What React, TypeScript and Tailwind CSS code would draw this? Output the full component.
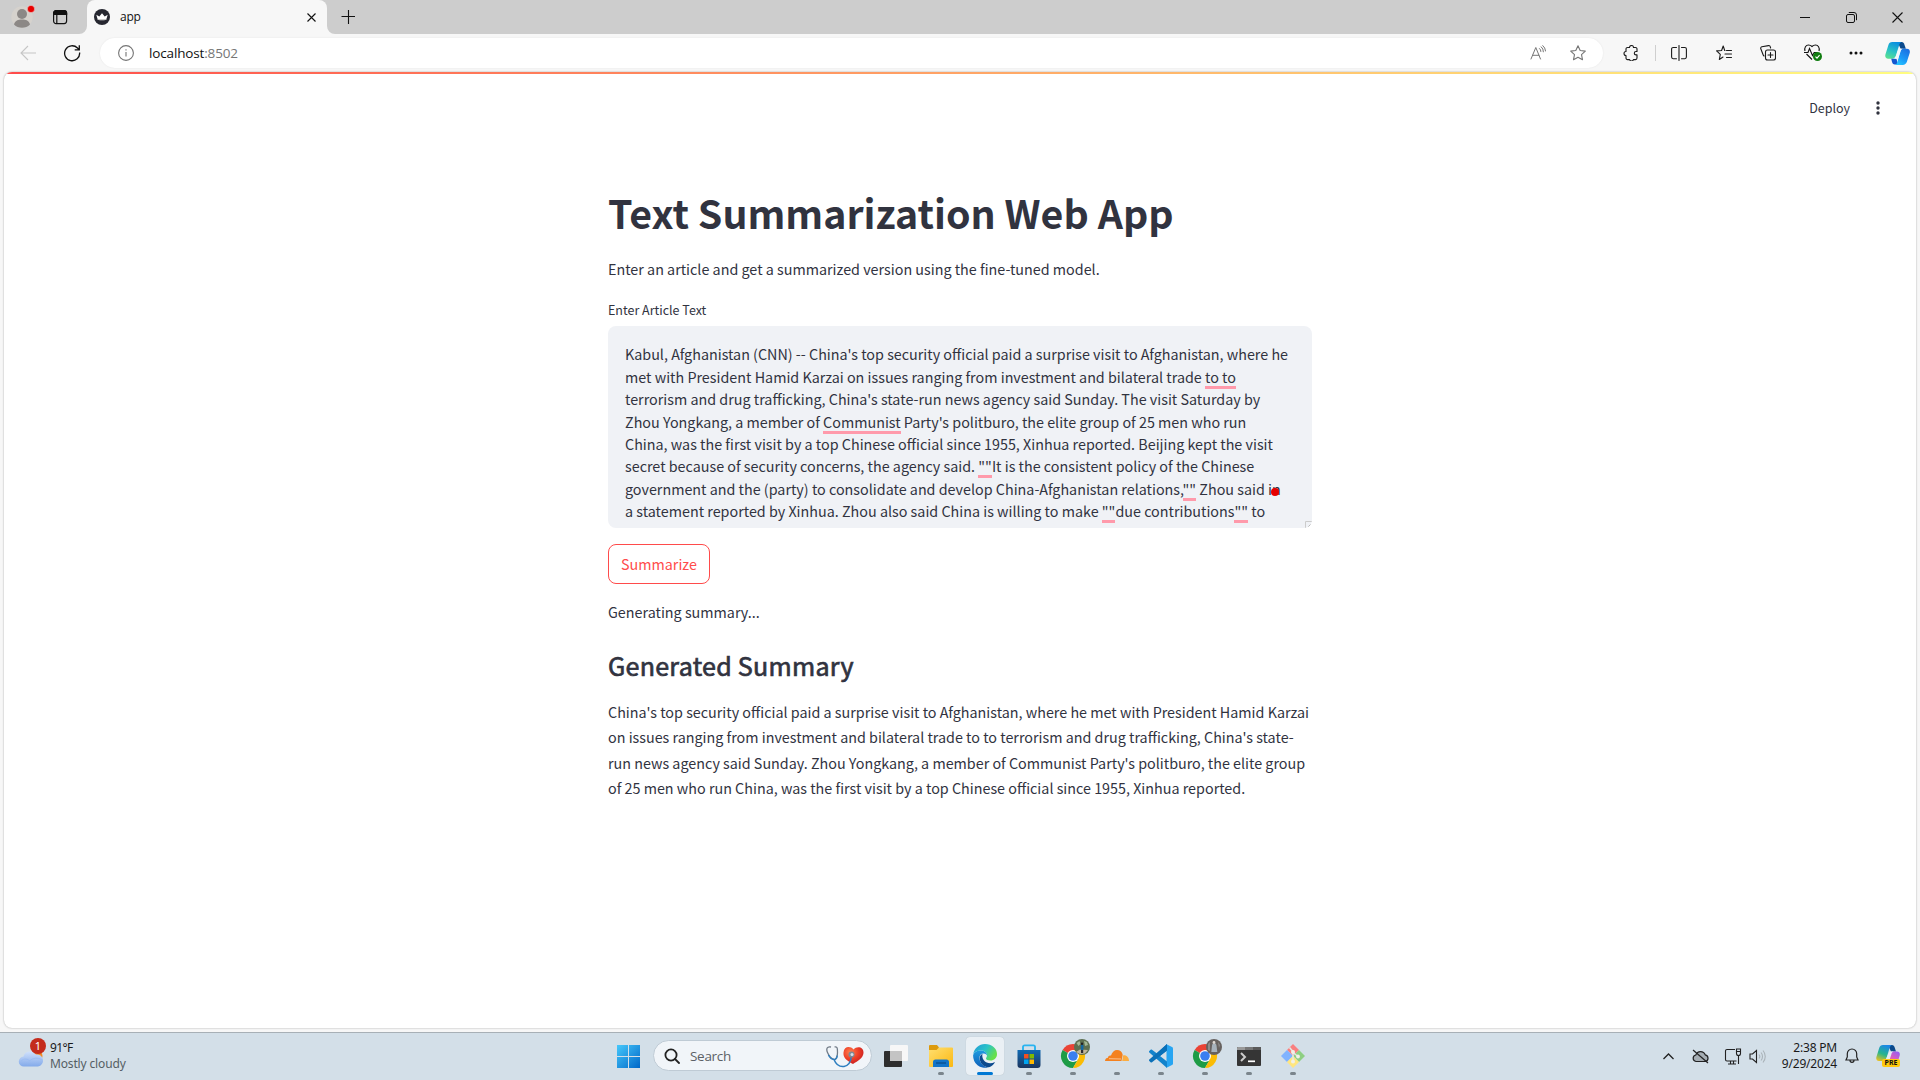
import React from "react";

function Mark({ children }: { children: React.ReactNode }) {
  return (
    <span className="relative">
      {children}
      <span className="absolute top-[20px] right-0 left-0 h-[3px] bg-[#ff9aab]" />
    </span>
  );
}

const INPUT_LINES: React.ReactNode[] = [
  <>Kabul, Afghanistan (CNN) -- China's top security official paid a surprise visit to Afghanistan, where he</>,
  <>met with President Hamid Karzai on issues ranging from investment and bilateral trade <Mark>to to</Mark></>,
  <>terrorism and drug trafficking, China's state-run news agency said Sunday. The visit Saturday by</>,
  <>Zhou Yongkang, a member of <Mark>Communist</Mark> Party's politburo, the elite group of 25 men who run</>,
  <>China, was the first visit by a top Chinese official since 1955, Xinhua reported. Beijing kept the visit</>,
  <>secret because of security concerns, the agency said. <Mark>""</Mark>It is the consistent policy of the Chinese</>,
  <>government and the (party) to consolidate and develop China-Afghanistan relations,<Mark>""</Mark> Zhou said in</>,
  <>a statement reported by Xinhua. Zhou also said China is willing to make <Mark>""</Mark>due contributions<Mark>""</Mark> to</>,
];

const SUMMARY_LINES = [
  "China's top security official paid a surprise visit to Afghanistan, where he met with President Hamid Karzai",
  "on issues ranging from investment and bilateral trade to to terrorism and drug trafficking, China's state-",
  "run news agency said Sunday. Zhou Yongkang, a member of Communist Party's politburo, the elite group",
  "of 25 men who run China, was the first visit by a top Chinese official since 1955, Xinhua reported.",
];

function Cell({ w, children }: { w: string; children: React.ReactNode }) {
  return <div className={`${w} flex shrink-0 items-center justify-center`}>{children}</div>;
}

function Line({ s = 16, children, color = "#1b1b1b", sw = 1.1 }: { s?: number; children: React.ReactNode; color?: string; sw?: number }) {
  return (
    <svg width={s} height={s} viewBox={`0 0 ${s} ${s}`} fill="none" stroke={color} strokeWidth={sw} strokeLinecap="round" strokeLinejoin="round">
      {children}
    </svg>
  );
}

function TabStrip() {
  return (
    <div className="flex h-[34px] bg-[#cdcdcd]">
      <div className="flex h-[34px] w-[87px] items-center">
        <svg className="ml-[10px]" width="26" height="26" viewBox="0 0 26 26">
          <circle cx="12" cy="13" r="10.7" fill="#d6d2cd" />
          <circle cx="12" cy="10" r="5" fill="#8c8886" />
          <path d="M4 20.5c1-4 4-5 8-5s7 1 8 5c-2 2.200-5 3.200-8 3.200s-6-1-8-3.200z" fill="#8c8886" />
          <circle cx="21" cy="5" r="3.600" fill="#e80000" stroke="#f0d8d6" strokeWidth=".5" />
        </svg>
        <svg className="ml-[16px]" width="16" height="16" viewBox="0 0 16 16" fill="none" stroke="#111" strokeWidth="1.200">
          <rect x="1.600" y="1.600" width="13" height="13" rx="2.500" />
          <path d="M1.600 4.200a2.600 2.600 0 0 1 2.600-2.600h8a2.500 2.500 0 0 1 2.400 2.600v1.200h-13z" fill="#111" />
          <path d="M4.800 5v9.500" />
        </svg>
      </div>
      <div className="relative flex h-[34px] w-[240px] items-center rounded-t-[8px] bg-[#f7f7f7]">
        <svg className="absolute bottom-0 -left-[8px]" width="8" height="8"><path d="M8 0v8H0a8 8 0 0 0 8-8z" fill="#f7f7f7" /></svg>
        <svg className="absolute bottom-0 -right-[8px]" width="8" height="8"><path d="M0 0v8h8a8 8 0 0 1-8-8z" fill="#f7f7f7" /></svg>
        <svg className="ml-[7px]" width="16" height="16" viewBox="0 0 16 16">
          <circle cx="8" cy="8" r="8" fill="#262730" />
          <path d="M2.300 5.800l3 1.700L8 4.200l2.700 3.300 3-1.700-1.500 4.900c-2.800.8-5.600.8-8.400 0z" fill="#fff" />
          <path d="M3.700 10.500h8.600" stroke="#bbb" strokeWidth=".8" />
        </svg>
        <span className="ml-[10px] font-['Open_Sans'] text-[12px] leading-4 tracking-[-0.2px] text-[#111]">app</span>
        <svg className="mr-[11px] ml-auto" width="9" height="9" viewBox="0 0 9 9" stroke="#111" strokeWidth="1.100"><path d="M.5.5l8 8M8.500.5l-8 8" /></svg>
      </div>
      <div className="flex w-[42px] items-center justify-center">
        <svg width="14" height="14" viewBox="0 0 14 14" stroke="#111" strokeWidth="1.100"><path d="M7.500 0v14M.5 6.500h14" /></svg>
      </div>
      <div className="ml-auto flex">
        <Cell w="w-[46px]"><svg width="10" height="10" stroke="#111"><path d="M0 5.500h10" /></svg></Cell>
        <Cell w="w-[46px]">
          <svg width="11" height="11" viewBox="0 0 11 11" fill="none" stroke="#111"><rect x=".5" y="2.500" width="8" height="8" rx="1.500" /><path d="M2.800.5h5.200a2.500 2.500 0 0 1 2.500 2.500v5.200" /></svg>
        </Cell>
        <Cell w="w-[46px]"><svg width="11" height="11" viewBox="0 0 11 11" stroke="#111" strokeWidth="1.100"><path d="M.5.5l10 10M10.500.5l-10 10" /></svg></Cell>
      </div>
    </div>
  );
}

function Toolbar() {
  return (
    <div className="flex h-[38px] items-center bg-[#f7f7f7]">
      <div className="flex w-[100px] items-center">
        <svg className="ml-[20px]" width="17" height="16" viewBox="0 0 17 16" fill="none" stroke="#c6c6c6" strokeWidth="1.100"><path d="M16 8H1M8 1L1 8l7 7" /></svg>
        <svg className="ml-[26px]" width="18" height="18" viewBox="0 0 18 18" fill="none" stroke="#111" strokeWidth="1.300"><path d="M16.600 8.500A7.500 7.500 0 1 1 14.500 4l1.500 1.500M16.300 1.200v4.600h-4.600" /></svg>
      </div>
      <div className="flex h-[30px] w-[1503px] items-center rounded-full bg-white shadow-[0_0_2px_rgba(0,0,0,0.08)]">
        <svg className="ml-[18px]" width="16" height="16" viewBox="0 0 16 16" fill="none" stroke="#747474" strokeWidth="1.100"><circle cx="8" cy="8" r="7.400" /><path d="M8 7v4.500M8 4.300v1.300" /></svg>
        <span className="ml-[15px] font-['Open_Sans'] text-[13.500px] leading-5 tracking-[-0.15px] text-[#111]">localhost<span className="text-[#767676]">:8502</span></span>
        <div className="mr-[5px] ml-auto flex">
          <Cell w="w-[40px]"><Line color="#767676" sw={1}><path d="M1 14L5.800 2.500l4.700 11.500M2.700 10.300h6.200M9.500 3.500a3.500 3.500 0 0 1 1.400 3M11.200 1.800a6 6 0 0 1 2.200 5M12.800.6A8 8 0 0 1 15.600 6" /></Line></Cell>
          <Cell w="w-[40px]"><Line color="#767676"><path d="M8 .8l2.200 4.700 5.100.6-3.800 3.500 1 5.100L8 12.200l-4.500 2.500 1-5.100L.7 6.100l5.100-.6z" /></Line></Cell>
        </div>
      </div>
      <div className="ml-[8px] flex items-center">
        <Cell w="w-[40px]">
          <Line><path d="M4.500 2.500h2a2 2 0 0 1 4 0h2a1.500 1.500 0 0 1 1.500 1.500v2.500h-1a1.700 1.700 0 0 0 0 3.400h1V13a1.600 1.600 0 0 1-1.500 1.600h-2.100a2 2 0 0 1-3.800 0H4.500A1.500 1.500 0 0 1 3 13v-2.500a2 2 0 0 1 0-4V4a1.500 1.500 0 0 1 1.500-1.500z" /></Line>
        </Cell>
        <div className="ml-[4px] h-4 w-px bg-[#cfcfcf]" />
        <Cell w="w-[46px]"><Line><path d="M5.500 2.500H2.200A1.600 1.600 0 0 0 .6 4.100v8a1.600 1.600 0 0 0 1.600 1.600h3.300M10.500 2.500h3.300a1.600 1.600 0 0 1 1.600 1.600v8a1.600 1.600 0 0 1-1.600 1.600h-3.300M8 .5v15" /></Line></Cell>
        <Cell w="w-[43px]"><Line><path d="M9 5.500h-.3L7.200 1 5.600 5.500.6 5.900l3.700 3.400-1 5.200L7 12M10.500 5.500H15.500M9 9h6.500M10.500 12.500h5" /></Line></Cell>
        <Cell w="w-[45px]"><Line><path d="M3 9.500L.7 3.500A1.600 1.600 0 0 1 1.800 1.800L8.500.6a1.600 1.600 0 0 1 1.800 1.200l.3 1.200M3 9.500a5 5 0 0 0 1 1.500" /><rect x="5.500" y="5" width="10" height="10" rx="2" /><path d="M10.500 7.500v5M8 10h5" /></Line></Cell>
        <Cell w="w-[45px]">
          <svg width="20" height="18" viewBox="0 0 20 18" fill="none" stroke="#111" strokeWidth="1.100">
            <path d="M2 7C1 3.500 3 1 5.500 1 7.500 1 9 2.500 9 2.500S10.500 1 12.500 1C15 1 17 3.500 16 7M3.500 10L9 15.500M1 8.500h4l1.500-4 3 7 1.700-3H14" />
            <circle cx="14.500" cy="12.500" r="4.500" fill="#107c10" stroke="none" /><path d="M12.500 12.700l1.500 1.500 2.600-3" stroke="#fff" />
          </svg>
        </Cell>
        <Cell w="w-[42px]"><svg width="14" height="4" fill="#111"><circle cx="2" cy="2" r="1.500" /><circle cx="7" cy="2" r="1.500" /><circle cx="12" cy="2" r="1.500" /></svg></Cell>
        <div className="w-[40px] pl-[8px]"><Copilot size={25} id="a" /></div>
      </div>
    </div>
  );
}

function Copilot({ size, id }: { size: number; id: string }) {
  const pink = id === "b";
  return (
    <svg width={size} height={size} viewBox="0 0 24 24">
      <defs>
        <linearGradient id={`${id}1`} x1=".6" y1="0" x2=".2" y2="1"><stop offset="0" stopColor={pink ? "#1a86e8" : "#0a8fe0"} /><stop offset=".55" stopColor={pink ? "#28b58c" : "#2bc4c4"} /><stop offset="1" stopColor={pink ? "#e8c020" : "#5be08f"} /></linearGradient>
        <linearGradient id={`${id}2`} x1=".8" y1="0" x2=".2" y2="1"><stop offset="0" stopColor={pink ? "#9a5cf0" : "#1b6fe0"} /><stop offset=".6" stopColor={pink ? "#f060a8" : "#1a9cf8"} /><stop offset="1" stopColor={pink ? "#ff9a50" : "#28c8ff"} /></linearGradient>
      </defs>
      <path d="M12 1h4c1.500 0 2.200 1 2.700 2.500l1.300 4h-5z" fill="#0b4a8c" />
      <path d="M7 1h9c-1.500.5-2 1.500-2.500 3.300l-3 9.700c-.6 2-1.800 3-3.500 3H3C.8 17-.2 15.300.4 13L3.200 4C3.800 2 5 1 7 1z" fill={`url(#${id}1)`} />
      <path d="M6 17h5l1.500 5.500H9.500C7.800 22.500 7 21.500 6.700 20z" fill={pink ? "#f08030" : "#1457d0"} />
      <path d="M17 7.500h4c2.300 0 3.300 1.700 2.700 4l-2.700 8.500c-.6 2-2 3-4 3H9.500c1.500-.5 2-1.500 2.500-3l2.500-9.500c.5-2 1.300-3 2.500-3z" fill={`url(#${id}2)`} />
      {pink && <path d="M13.500 7.500h4c-1.200.4-1.700 1.300-2.200 3L13.500 16h-4z" fill="#e4ecf4" />}
      {!pink && <path d="M13 7.500h4c-1.200.4-1.700 1.300-2.200 3l-2.200 6.500H9.700z" fill="#f2f8fc" />}
    </svg>
  );
}

function Page() {
  return (
    <div className="h-[960px] bg-[#f7f7f7] px-1">
      <div className="h-[956px] overflow-hidden rounded-[8px] bg-white font-['Noto_Sans_CJK_SC',sans-serif] text-[#31333f] shadow-[0_0_2px_rgba(0,0,0,0.35)]">
        <div className="h-[2px] bg-[linear-gradient(90deg,#ff4b4b,#fffd80)]" />
        <div className="flex h-[68px] items-center justify-end pr-[36px]">
          <span className="text-[12.500px] leading-5">Deploy</span>
          <svg className="ml-[26px]" width="4" height="14" fill="#31333f"><circle cx="2" cy="2" r="1.700" /><circle cx="2" cy="7" r="1.700" /><circle cx="2" cy="12" r="1.700" /></svg>
        </div>
        <div className="mx-auto mt-[43px] w-[704px] text-[14.330px] whitespace-nowrap">
          <h1 className="h-[54px] text-[39.320px] leading-[53px] font-bold">Text Summarization Web App</h1>
          <p className="mt-[17px] h-[26px] leading-[26.400px]">Enter an article and get a summarized version using the fine-tuned model.</p>
          <label className="mt-[17px] block h-[27px] text-[12.500px] leading-[22px]">Enter Article Text</label>
          <div className="relative h-[202px] overflow-hidden rounded-[8px] bg-[#f0f2f6] px-[17px] pt-[17.400px] leading-[22.400px]">
            {INPUT_LINES.map((line, i) => (
              <div key={i} className="h-[22.400px]">{line}</div>
            ))}
            <span className="absolute top-[162px] left-[663px] h-2 w-2 rounded-full bg-[#e60000]" />
            <svg className="absolute right-0 bottom-0" width="7" height="7" fill="none" stroke="#aaa"><path d="M.5 7V.5H7" stroke="#ccc" /><path d="M3 6l3-3" /></svg>
          </div>
          <button className="mt-4 flex h-10 w-[102px] items-center justify-center rounded-[8px] border border-[#ff4b4b] leading-[25.600px] text-[#ff4b4b]">Summarize</button>
          <p className="mt-[15px] h-[49px] leading-[26.400px]">Generating summary...</p>
          <h2 className="h-[50.700px] text-[25.060px] leading-[34.600px] font-normal tracking-[0.270px] [-webkit-text-stroke:0.700px_#31333f]">Generated Summary</h2>
          {SUMMARY_LINES.map((l) => (
            <p key={l} className="h-[25.600px] leading-[25.600px]">{l}</p>
          ))}
        </div>
      </div>
    </div>
  );
}

function TaskIcon({ children, active = false }: { children: React.ReactNode; active?: boolean }) {
  return (
    <div className="relative flex h-[46px] w-[44px] shrink-0 items-center justify-center">
      {active && <div className="absolute top-[4px] left-[3px] h-[38px] w-[38px] rounded-[4px] bg-[#eaf0f5] shadow-[0_0_1px_rgba(0,0,0,0.2)]" />}
      <div className="relative">{children}</div>
      {active ? (
        <div className="absolute bottom-[4px] h-[3px] w-4 rounded-full bg-[#0078d4]" />
      ) : (
        <div className="absolute bottom-[4px] h-[3px] w-[6px] rounded-full bg-[#7b858c]" />
      )}
    </div>
  );
}

function Chrome({ photo }: { photo: "park" | "street" }) {
  return (
    <svg className="overflow-visible" width="30" height="30" viewBox="0 0 30 30">
      <path d="M15 15L4.600 9A12 12 0 0 1 25.400 9z" fill="#ea4335" />
      <path d="M15 15L20.200 18 15 27A12 12 0 0 1 4.600 9z" fill="#1e9c46" />
      <path d="M15 9h10.400A12 12 0 0 1 15 27l5.200-9z" fill="#fbbc04" />
      <circle cx="15" cy="15" r="6" fill="#fff" /><circle cx="15" cy="15" r="4.800" fill="#3a7ff0" />
      {photo === "park" ? (
        <g><circle cx="24" cy="6" r="8" fill="#5d6f50" /><path d="M18.500 2l3-2 1 3-2 2zM26 0l3 1 1 3-3 1z" fill="#a3b795" /><path d="M18 11l4-2.500 8 .5-3 3.500-5 .5z" fill="#c1b79b" /><path d="M22.800 4h2.600v5h-2.600z" fill="#1467a0" /><path d="M23 9h2.200v3H23z" fill="#2a2a30" /><circle cx="24" cy="2.700" r="1.200" fill="#222" /></g>
      ) : (
        <g><circle cx="24" cy="6" r="8" fill="#67625f" /><path d="M18 3l2-2v9l-2-1zM28 1l2 3-1 3z" fill="#8d8b89" /><path d="M22 4.500a2 2 0 0 1 4.500 0l.8 6.500h-6z" fill="#a7b2bb" /><circle cx="24" cy="1.500" r="1.400" fill="#ded8d2" /></g>
      )}
    </svg>
  );
}

function Taskbar() {
  return (
    <div className="flex h-[48px] border-t border-[#a8b0b6] bg-[#d3dfe8] pb-px font-['Noto_Sans'] text-[12px]">
      <div className="flex w-[607px] pt-[8px] pl-[18px]">
        <svg width="30" height="30" viewBox="0 0 30 30">
          <defs><linearGradient id="cl" x1="0" y1="0" x2="0" y2="1"><stop offset="0" stopColor="#cfe0fb" /><stop offset="1" stopColor="#83aaea" /></linearGradient></defs>
          <circle cx="19" cy="15" r="5.500" fill="#f08a24" />
          <path d="M6 25.500a5 5 0 0 1-.5-10A7 7 0 0 1 18 13.500a6 6 0 0 1 2 12z" fill="url(#cl)" />
          <path d="M3 20c3-3 7-2 9 0 2-3 8-4 12-1" fill="none" stroke="#9bbcf2" />
        </svg>
        <div className="relative left-[4px] -mt-[3px] -ml-[22px] flex h-4 w-4 items-center justify-center self-start rounded-full bg-[#c42b1c] text-[11px] leading-4 text-white">1</div>
        <div className="-mt-px ml-[8px] text-[#1a1a1a]">
          <div className="leading-4 tracking-[-0.6px]">91°F</div>
          <div className="leading-4 tracking-[-0.15px] text-[#555e64]">Mostly cloudy</div>
        </div>
      </div>
      <Cell w="w-[43px]">
        <svg width="23" height="23" viewBox="0 0 23 23"><defs><linearGradient id="win" x1="0" y1="0" x2="1" y2="1"><stop offset="0" stopColor="#46c8fb" /><stop offset="1" stopColor="#0067c8" /></linearGradient></defs><path d="M0 0h11v11H0zM12 0h11v11H12zM0 12h11v11H0zM12 12h11v11H12z" fill="url(#win)" /></svg>
      </Cell>
      <div className="mt-[7px] ml-[3px] flex h-[31px] w-[219px] items-center rounded-full border border-[#bfcbd5] bg-[#f1f5f9]">
        <svg className="ml-[10px]" width="16" height="16" viewBox="0 0 16 16" fill="none" stroke="#222" strokeWidth="1.800"><circle cx="7" cy="7" r="5.600" /><path d="M11 11l4 4" strokeLinecap="round" /></svg>
        <span className="ml-[10px] font-['Open_Sans'] text-[13.500px] leading-5 tracking-[-0.3px] text-[#5c6166]">Search</span>
        <svg className="mr-[7px] ml-auto" width="38" height="24" viewBox="0 0 38 24" fill="none">
          <defs><radialGradient id="ht" cx=".35" cy=".3" r=".8"><stop offset="0" stopColor="#ff8150" /><stop offset=".5" stopColor="#ee3f28" /><stop offset="1" stopColor="#c01820" /></radialGradient></defs>
          <path d="M27 20c-7-3.500-10-7-9.500-11.500C18 2.500 24 1.500 27.500 5.500 31 1.500 38 3 37.500 9c-.5 5-5.500 8-10.500 11z" fill="url(#ht)" />
          <path d="M5 3C1 2 0 5 1.500 8.500S6 15 8 15.500s3.500-3 3.500-7S11.500 2 8.500 3" stroke="#707a86" strokeWidth="1.300" />
          <path d="M2.500 11C4 14 6 15.500 8 15.500s3-2 3.300-4M8 15.500c2 5 6 7.500 10 7 5-1 7-5 7.500-11" stroke="#2f7fc0" strokeWidth="1.500" />
          <circle cx="25.500" cy="10.500" r="3" fill="#7d8794" /><circle cx="26" cy="10.500" r="1.500" fill="#d9dee5" />
        </svg>
      </div>
      <div className="ml-[3px] flex w-[44px] items-center justify-center">
        <svg className="-translate-x-px" width="24" height="22" viewBox="0 0 24 22"><rect x="0" y="6" width="18" height="16" rx="1" fill="#2e2e2e" /><rect x="6" y="0" width="18" height="16" rx="1" fill="#f7f7f7" /><path d="M6 6h12v10H6z" fill="#c4c4c4" /></svg>
      </div>
      <TaskIcon>
        <svg width="24" height="22" viewBox="0 0 24 22"><defs><linearGradient id="fo" x1="0" y1="0" x2="1" y2="1"><stop offset="0" stopColor="#ffdf70" /><stop offset="1" stopColor="#fbb812" /></linearGradient></defs><path d="M0 1a1 1 0 0 1 1-1h7l2 2.500V6H0z" fill="#dd9a0c" /><path d="M0 5h7.500L10 2.500h13a1 1 0 0 1 1 1V21a1 1 0 0 1-1 1H1a1 1 0 0 1-1-1z" fill="url(#fo)" /><path d="M4 22v-5a2.500 2.500 0 0 1 2.500-2.500h11A2.500 2.500 0 0 1 20 17v5z" fill="#1274c8" /><path d="M7 18h10" stroke="#0b5394" strokeWidth="1.500" /></svg>
      </TaskIcon>
      <TaskIcon active>
        <svg width="24" height="24" viewBox="0 0 24 24">
          <defs>
            <linearGradient id="e1" x1="0" y1="0" x2="1" y2=".5"><stop offset="0" stopColor="#2098d8" /><stop offset=".55" stopColor="#2ac3c8" /><stop offset="1" stopColor="#66e04a" /></linearGradient>
            <linearGradient id="e2" x1="0" y1="0" x2="0" y2="1"><stop offset="0" stopColor="#1d9ae0" /><stop offset="1" stopColor="#0f5fb8" /></linearGradient>
          </defs>
          <path d="M.2 10.500C1 4.500 6 0 12 0c7 0 12 4.500 12 10 0 4-3 6.500-6.500 6.500-3 0-4.500-1-4.500-2 0-.8 1-1.200 1-3C14 8.500 11 6.500 8 6.500c-4 0-7 2-7.800 4z" fill="url(#e1)" />
          <path d="M.1 11.500C.5 8.500 4 6.500 7.700 6.500c3.300 0 6.300 2 6.300 5 0 0-1-2-3.500-2C7.500 9.500 6 12 6.500 15c.7 4.500 4.500 7.500 8.500 8.500A12 12 0 0 1 .1 11.500z" fill="url(#e2)" />
          <path d="M9.500 9.700C7 11 6 13.500 7 16.500c1.300 4.500 5.500 7 9 6.800 2.500-.6 5-2.800 6-5.300-4 2-8.500 1.500-11-1.500-1.800-2.200-2-5-1.500-6.800z" fill="#0c4a8e" />
        </svg>
      </TaskIcon>
      <TaskIcon>
        <svg width="24" height="24" viewBox="0 0 24 24"><defs><linearGradient id="st" x1="0" y1="0" x2="0" y2="1"><stop offset="0" stopColor="#0f6ab4" /><stop offset="1" stopColor="#1b355e" /></linearGradient></defs><path d="M6 7V3a1.600 1.600 0 0 1 1.600-1.600h8.800A1.600 1.600 0 0 1 18 3v4" fill="none" stroke="#2ab4f0" strokeWidth="1.900" /><path d="M.5 6h23v15a3 3 0 0 1-3 3h-17a3 3 0 0 1-3-3z" fill="url(#st)" /><path d="M7 10h4.500v4.500H7z" fill="#f25022" /><path d="M12.500 10H17v4.500h-4.500z" fill="#7fba00" /><path d="M7 15.500h4.500V20H7z" fill="#00a4ef" /><path d="M12.500 15.500H17V20h-4.500z" fill="#ffb900" /></svg>
      </TaskIcon>
      <TaskIcon><Chrome photo="park" /></TaskIcon>
      <TaskIcon>
        <svg width="24" height="12" viewBox="0 0 24 12"><path d="M0 11c0-2 1.200-3.200 3-3.300C3 6 4.500 5 6 5.600 7 2 9.500 0 12 0c3 0 5.200 2 5.700 4.700L16.500 11z" fill="#f4811f" /><path d="M17.200 11l1-5.800c3.500-.5 5.800 2.300 5.800 5.800z" fill="#fbad41" /><path d="M4 8.700l12 .3" stroke="#fff" strokeWidth=".5" /></svg>
      </TaskIcon>
      <TaskIcon>
        <svg width="24" height="24" viewBox="0 0 24 24"><path d="M17.500.3L23 3c.6.300 1 .8 1 1.500v15c0 .7-.4 1.200-1 1.500l-5.500 2.700z" fill="#27a5f2" /><path d="M18 0L8 9.500 3 5.800c-.5-.4-1-.3-1.400 0L.3 7c-.4.4-.4 1 0 1.400L18 24v-6.500L11 12l7-5.500z" fill="#1283cc" /><path d="M.3 15.600L18 0v6.500L3 18.200c-.5.4-1 .3-1.400 0L.3 17c-.4-.4-.4-1 0-1.400z" fill="#0a70b8" /></svg>
      </TaskIcon>
      <TaskIcon><Chrome photo="street" /></TaskIcon>
      <TaskIcon>
        <svg width="24" height="19" viewBox="0 0 24 19"><rect width="24" height="19" rx="1" fill="#353535" /><path d="M0 1a1 1 0 0 1 1-1h7v3H0z" fill="#9a9a9a" /><path d="M8 0h8v3H8z" fill="#777" /><path d="M16 0h7a1 1 0 0 1 1 1v2h-8z" fill="#5a5a5a" /><path d="M4 6l4 4-4 4" fill="none" stroke="#ccc" strokeWidth="2" /><path d="M11 14.300h7" stroke="#fff" strokeWidth="1.700" /></svg>
      </TaskIcon>
      <TaskIcon>
        <svg width="24" height="24" viewBox="0 0 24 24"><path d="M12 0l6 6-6 6-6-6z" fill="#f98080" /><path d="M6 6l6 6-6 6-6-6z" fill="#80b3ff" /><path d="M18 6l6 6-6 6-6-6z" fill="#8ecf82" /><path d="M12 12l6 6-6 6-6-6z" fill="#ffe680" /><path d="M8.500 3.500l3.500 4v10M12 8.500l5 4" fill="none" stroke="#e3e9e3" strokeWidth="1.500" /><circle cx="12" cy="8" r="2" fill="#f0f0e8" /><circle cx="17" cy="12.500" r="1.900" fill="#f0f0e8" /><circle cx="12" cy="17.500" r="2" fill="#f0f0e8" /></svg>
      </TaskIcon>
      <div className="mr-[20px] ml-auto flex items-center">
        <svg className="mr-[18px]" width="11" height="7" viewBox="0 0 11 7" fill="none" stroke="#222" strokeWidth="1.300"><path d="M.5 6l5-5 5 5" /></svg>
        <svg className="mr-[15px]" width="17" height="15" viewBox="0 0 17 15" fill="none" stroke="#222" strokeWidth="1.200"><path d="M4 12.500a3.300 3.300 0 0 1-.2-6.500 5 5 0 0 1 9.400-.2 3.400 3.400 0 0 1 0 6.700z" fill="#a5adb3" /><path d="M1 1l15 13" /></svg>
        <svg className="mr-[7px]" width="18" height="17" viewBox="0 0 18 17" fill="none" stroke="#222" strokeWidth="1.100"><path d="M11 1.500H3A1.500 1.500 0 0 0 1.500 3v8.500A1.500 1.500 0 0 0 3 13h9.500M6.500 13v3M9.500 13v3M4 16h8M12.500 1h4v4.500a2 2 0 0 1-4 0zM14.500 7.500V16M12.500 3.500h4" /></svg>
        <svg className="mr-[15px]" width="18" height="15" viewBox="0 0 18 15" fill="none" stroke="#222" strokeWidth="1.100"><path d="M1 5h2.500L7.500 1.500v12L3.500 10H1z" /><path d="M10 5.500c1 1.200 1 2.800 0 4M12 3.500c2 2.200 2 5.800 0 8M14 1.500c3 3.500 3 8.500 0 12" stroke="#aab3b9" /></svg>
        <div className="mr-[8px] flex w-[55px] flex-col items-end pb-px whitespace-nowrap text-[#1a1a1a]">
          <div className="leading-4 tracking-[-0.2px]">2:38 PM</div>
          <div className="leading-4 tracking-[-0.2px]">9/29/2024</div>
        </div>
        <svg className="mr-[17px]" width="14" height="16" viewBox="0 0 14 16" fill="none" stroke="#222" strokeWidth="1.200"><path d="M7 1a4.700 4.700 0 0 0-4.700 4.700V9L1 12h12l-1.300-3V5.700A4.700 4.700 0 0 0 7 1zM5 12.300a2 2 0 0 0 4 0" /></svg>
        <div className="relative">
          <Copilot size={24} id="b" />
          <span className="absolute top-[15px] left-[6px] h-[8px] w-[18px] rounded-[2px] bg-[#ffc90e] text-center text-[7px] leading-[8px] font-bold text-[#111]">PRE</span>
        </div>
      </div>
    </div>
  );
}

export default function App() {
  return (
    <div className="flex h-[1080px] w-[1920px] flex-col overflow-hidden bg-[#f7f7f7]">
      <TabStrip />
      <Toolbar />
      <Page />
      <Taskbar />
    </div>
  );
}
